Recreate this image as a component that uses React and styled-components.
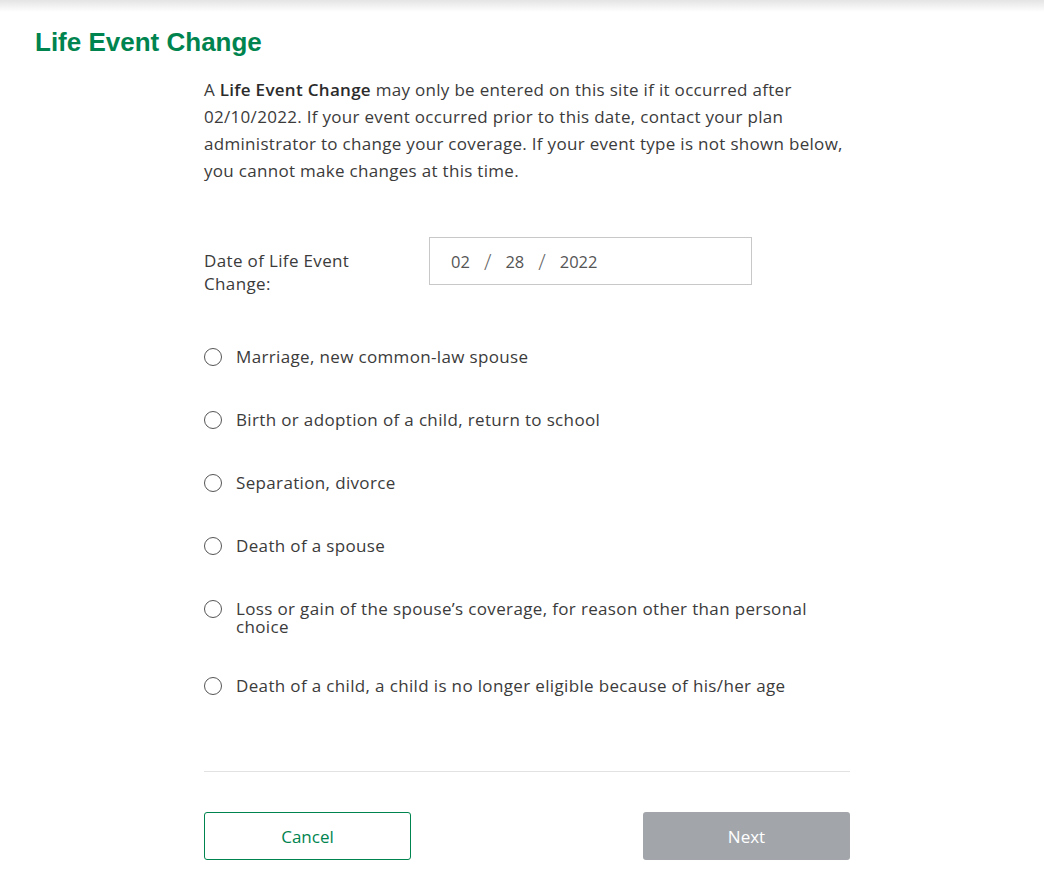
import styled, { createGlobalStyle } from "styled-components";

const GlobalStyle = createGlobalStyle`
  body {
    margin: 0;
    background: #ffffff;
    font-family: "Open Sans", Lato, sans-serif;
    color: #3b3b3b;
  }
`;

const events = [
  "Marriage, new common-law spouse",
  "Birth or adoption of a child, return to school",
  "Separation, divorce",
  "Death of a spouse",
  "Loss or gain of the spouse\u2019s coverage, for reason other than personal choice",
  "Death of a child, a child is no longer eligible because of his/her age",
];

const App = () => {
  return (
    <Page>
      <GlobalStyle />
      <TopShade />
      <Title>Life Event Change</Title>
      <Content>
        <Intro>
          A <strong>Life Event Change</strong> may only be entered on this site
          if it occurred after 02/10/2022. If your event occurred prior to this
          date, contact your plan administrator to change your coverage. If
          your event type is not shown below, you cannot make changes at this
          time.
        </Intro>

        <DateRow>
          <DateLabel>Date of Life Event Change:</DateLabel>
          <DateBox>
            <span>02</span>
            <Slash>/</Slash>
            <span>28</span>
            <Slash>/</Slash>
            <span>2022</span>
          </DateBox>
        </DateRow>

        <Options>
          {events.map((ev) => (
            <Option key={ev}>
              <Radio type="radio" name="event" />
              <OptionText>{ev}</OptionText>
            </Option>
          ))}
        </Options>

        <Divider />

        <Actions>
          <CancelButton>Cancel</CancelButton>
          <NextButton disabled>Next</NextButton>
        </Actions>
      </Content>
    </Page>
  );
};

const Page = styled.div`
  min-height: 896px;
  background: #fff;
`;

const TopShade = styled.div`
  height: 12px;
  background: linear-gradient(#e4e4e4, #ffffff);
`;

const Title = styled.h1`
  margin: 14px 0 0 35px;
  font-family: "Liberation Sans", Arial, sans-serif;
  font-weight: 700;
  font-size: 26px;
  line-height: 32px;
  color: #00844f;
`;

const Content = styled.div`
  margin-left: 204px;
  width: 646px;
`;

const Intro = styled.p`
  margin: 18px 0 0;
  font-size: 17px;
  line-height: 27px;
  letter-spacing: 0.3px;
  color: #3b3b3b;

  strong {
    font-weight: 600;
    color: #2b2b2b;
  }
`;

const DateRow = styled.div`
  display: flex;
  align-items: flex-start;
  margin-top: 53px;
`;

const DateLabel = styled.div`
  width: 170px;
  margin-top: 12px;
  margin-right: 55px;
  font-size: 17px;
  letter-spacing: 0.35px;
  line-height: 23px;
`;

const DateBox = styled.div`
  box-sizing: border-box;
  width: 323px;
  height: 48px;
  border: 1px solid #c8c8c8;
  display: flex;
  align-items: center;
  gap: 14px;
  padding-left: 21px;
  font-family: "Open Sans", sans-serif;
  font-size: 16.5px;
  color: #555;
`;

const Slash = styled.span`
  font-size: 22px;
  font-weight: 300;
  color: #666;
`;

const Options = styled.div`
  display: flex;
  flex-direction: column;
  gap: 34px;
  margin-top: 52px;
`;

const Option = styled.label`
  display: flex;
  align-items: flex-start;
  gap: 14px;
  min-height: 29px;
  cursor: pointer;
`;

const Radio = styled.input`
  appearance: none;
  margin: 1px 0 0;
  flex: none;
  width: 18px;
  height: 18px;
  border: 1px solid #555;
  border-radius: 50%;
  background: #fff;
`;

const OptionText = styled.span`
  font-size: 17px;
  letter-spacing: 0.35px;
  line-height: 18px;
  padding: 1px 0 6px;
  color: #3b3b3b;
  max-width: 582px;
`;

const Divider = styled.hr`
  margin: 66px 0 0;
  border: none;
  border-top: 1px solid #e2e2e2;
`;

const Actions = styled.div`
  display: flex;
  justify-content: space-between;
  margin-top: 40px;
`;

const BaseButton = styled.button`
  box-sizing: border-box;
  width: 207px;
  height: 48px;
  border-radius: 3px;
  font-family: "Open Sans", sans-serif;
  font-size: 17px;
`;

const CancelButton = styled(BaseButton)`
  background: #fff;
  border: 1px solid #00844f;
  color: #00844f;
`;

const NextButton = styled(BaseButton)`
  background: #a2a6ab;
  border: none;
  color: #fff;
`;

export default App;
